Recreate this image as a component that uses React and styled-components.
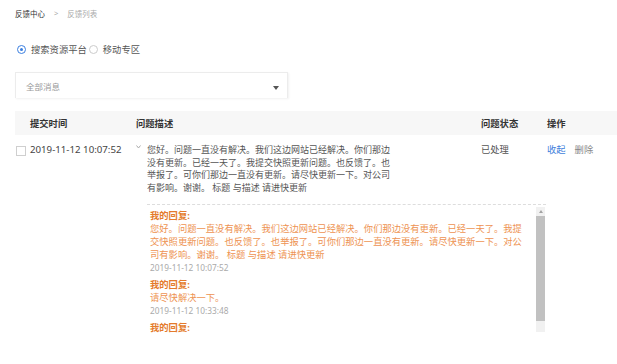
import React, { useState } from 'react';
import styled, { createGlobalStyle } from 'styled-components';

const GlobalStyle = createGlobalStyle`
  body {
    margin: 0;
    background: #fff;
    font-family: "Noto Sans", "Noto Sans CJK SC", sans-serif;
    color: #555;
  }
`;

const Page = styled.div`
  padding: 8px 0 0 15px;
  width: 602px;
`;

const Breadcrumb = styled.div`
  display: flex;
  align-items: center;
  gap: 9px;
  height: 10px;
  font-size: 7.5px;
  color: #aaa;

  & > b {
    font-weight: normal;
    color: #333;
  }
`;

const RadioGroup = styled.div`
  display: flex;
  align-items: center;
  margin-top: 25px;
  height: 12px;
`;

const RadioLabel = styled.label`
  display: flex;
  align-items: center;
  gap: 5px;
  margin: 0 0 0 2px;
  font-size: 9.3px;
  color: #555;
  cursor: pointer;
`;

const RadioDot = styled.span`
  width: 7px;
  height: 7px;
  border-radius: 50%;
  border: 1px solid ${(p) => (p.$checked ? '#3b7fe0' : '#ccc')};
  display: flex;
  align-items: center;
  justify-content: center;

  &::after {
    content: '';
    width: 3px;
    height: 3px;
    border-radius: 50%;
    background: ${(p) => (p.$checked ? '#3b7fe0' : 'transparent')};
  }
`;

const Select = styled.div`
  margin-top: 17px;
  width: 253px;
  height: 25px;
  padding: 0 8px 0 10px;
  border: 1px solid #ececec;
  border-bottom: none;
  box-shadow: 1px 1px 2px rgba(0, 0, 0, 0.06);
  display: flex;
  align-items: center;
  justify-content: space-between;
  font-size: 8.5px;
  color: #999;
`;

const Caret = styled.span`
  width: 0;
  height: 0;
  margin-top: 4px;
  border-left: 3px solid transparent;
  border-right: 3px solid transparent;
  border-top: 4px solid #555;
`;

const Grid = styled.div`
  display: grid;
  grid-template-columns: 121px 345px 66px 1fr;
  margin-top: 13px;
`;

const HeadCell = styled.div`
  background: #f7f7f7;
  height: 24px;
  display: flex;
  align-items: center;
  padding-left: ${(p) => p.$pad || 0}px;
  font-size: 9.3px;
  font-weight: bold;
  color: #333;
`;

const Cell = styled.div`
  padding-top: 9px;
  font-size: ${(p) => p.$size || 9.3}px;
  line-height: 12.7px;
  color: #555;
  display: flex;
  align-items: flex-start;
`;

const Check = styled.span`
  width: 8px;
  height: 8px;
  border: 1px solid #cfcfcf;
  margin: 2px 4px 0 1px;
  flex: none;
`;

const Time = styled.span`
  font-size: 9.7px;
  color: #444;
`;

const Expand = styled.svg`
  width: 5px;
  height: 4px;
  margin: 1px 6px 0 0;
  flex: none;
`;

const Desc = styled.div`
  white-space: nowrap;
`;

const Action = styled.a`
  color: ${(p) => (p.$primary ? '#3f7fdc' : '#888')};
  margin-right: 9px;
  cursor: pointer;
`;

const ReplyPanel = styled.div`
  grid-column: 2 / 5;
  justify-self: start;
  margin: 9px 0 0 11px;
  width: 399px;
  height: 131px;
  border-top: 1px dashed #ddd;
  display: flex;
`;

const ReplyBody = styled.div`
  flex: 1;
  overflow: hidden;
  padding: 4px 3px 0;
  font-size: 9.3px;
  line-height: 13px;
  white-space: nowrap;
`;

const Reply = styled.div`
  & + & {
    margin-top: 4px;
  }
`;

const ReplyTitle = styled.div`
  font-weight: bold;
  color: #e47b2c;
`;

const ReplyText = styled.div`
  color: #ee9352;
`;

const ReplyTime = styled.div`
  font-size: 8.3px;
  color: #aaa;
`;

const ScrollBar = styled.div`
  width: 9px;
  margin-right: 1px;
  padding-top: 2px;
  display: flex;
  flex-direction: column;
`;

const ScrollButton = styled.div`
  height: 9px;
  background: #f1f1f1;
  display: flex;
  align-items: center;
  justify-content: center;

  &::after {
    content: '';
    border-left: 2.5px solid transparent;
    border-right: 2.5px solid transparent;
    border-bottom: 3px solid #a3a3a3;
  }
`;

const ScrollThumb = styled.div`
  height: 105px;
  background: #c1c1c1;
`;

const ScrollTrack = styled.div`
  height: 11px;
  background: #f1f1f1;
`;

const replies = [
  {
    lines: [
      '您好。问题一直没有解决。我们这边网站已经解决。你们那边没有更新。已经一天了。我提',
      '交快照更新问题。也反馈了。也举报了。可你们那边一直没有更新。请尽快更新一下。对公',
      '司有影响。谢谢。 标题 与描述 请进快更新',
    ],
    time: '2019-11-12 10:07:52',
  },
  { lines: ['请尽快解决一下。'], time: '2019-11-12 10:33:48' },
  { lines: [], time: null },
];

const descLines = [
  '您好。问题一直没有解决。我们这边网站已经解决。你们那边',
  '没有更新。已经一天了。我提交快照更新问题。也反馈了。也',
  '举报了。可你们那边一直没有更新。请尽快更新一下。对公司',
  '有影响。谢谢。 标题 与描述 请进快更新',
];

const App = () => {
  const [platform, setPlatform] = useState('search');

  return (
    <Page>
      <GlobalStyle />
      <Breadcrumb>
        <b>反馈中心</b>
        <span>&gt;</span>
        <span>反馈列表</span>
      </Breadcrumb>

      <RadioGroup>
        <RadioLabel onClick={() => setPlatform('search')}>
          <RadioDot $checked={platform === 'search'} />
          搜索资源平台
        </RadioLabel>
        <RadioLabel onClick={() => setPlatform('mobile')}>
          <RadioDot $checked={platform === 'mobile'} />
          移动专区
        </RadioLabel>
      </RadioGroup>

      <Select>
        全部消息
        <Caret />
      </Select>

      <Grid>
        <HeadCell $pad={15}>提交时间</HeadCell>
        <HeadCell>问题描述</HeadCell>
        <HeadCell>问题状态</HeadCell>
        <HeadCell>操作</HeadCell>

        <Cell>
          <Check />
          <Time>2019-11-12 10:07:52</Time>
        </Cell>
        <Cell $size={9}>
          <Expand viewBox="0 0 5 4">
            <path d="M0.5 0.5 L2.5 3 L4.5 0.5" fill="none" stroke="#aaa" strokeWidth="1" />
          </Expand>
          <Desc>
            {descLines.map((l, i) => (
              <div key={i}>{l}</div>
            ))}
          </Desc>
        </Cell>
        <Cell>已处理</Cell>
        <Cell>
          <Action $primary>收起</Action>
          <Action>删除</Action>
        </Cell>

        <ReplyPanel>
          <ReplyBody>
            {replies.map((r, i) => (
              <Reply key={i}>
                <ReplyTitle>我的回复:</ReplyTitle>
                {r.lines.map((l, j) => (
                  <ReplyText key={j}>{l}</ReplyText>
                ))}
                {r.time && <ReplyTime>{r.time}</ReplyTime>}
              </Reply>
            ))}
          </ReplyBody>
          <ScrollBar>
            <ScrollButton />
            <ScrollThumb />
            <ScrollTrack />
          </ScrollBar>
        </ReplyPanel>
      </Grid>
    </Page>
  );
};

export default App;
